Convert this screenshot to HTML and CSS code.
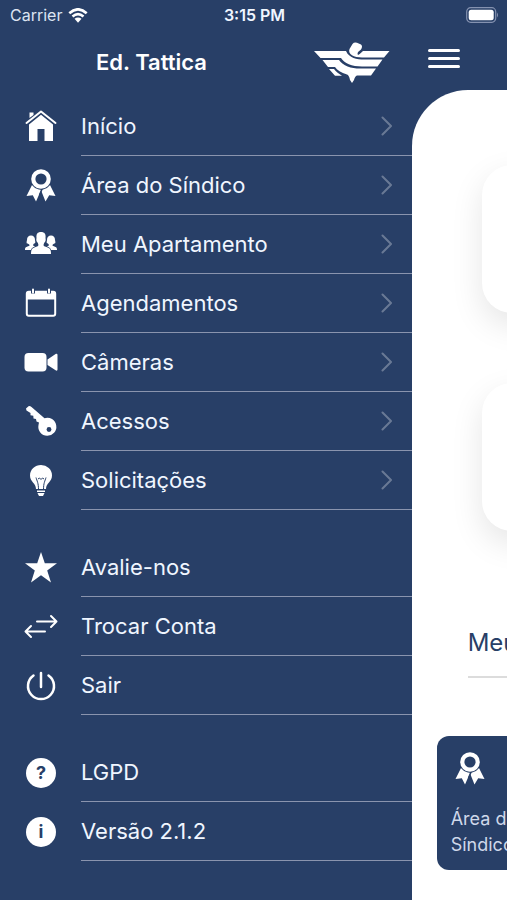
FILE: index.html
```
<!DOCTYPE html>
<html lang="pt-BR">
<head>
    <meta charset="UTF-8">
    <meta name="viewport" content="width=device-width, initial-scale=1.0">
    <title>Ed. Tattica</title>
    <link rel="stylesheet" href="styles.css">
</head>
<body>
    <!-- Shared shapes -->
    <svg class="symbols" aria-hidden="true">
        <symbol id="ribbon" viewBox="0 0 34 34">
            <path d="M8 16 2.500 27 8.800 26.200 12 32.500 17.500 20Z M26 16 31.500 27 25.200 26.200 21.500 32.500 16.500 20Z"/>
            <path class="cut" d="M18.500 19 15.500 26"/>
            <circle class="cut" cx="17" cy="10" r="10"/>
            <circle cx="17" cy="10" r="9.800"/>
            <circle class="hole" cx="17" cy="10" r="5.600"/>
        </symbol>
        <symbol id="chevron" viewBox="0 0 12 20">
            <path class="line" d="M1.500 1.500 10 10 1.500 18.500"/>
        </symbol>
    </svg>

    <header class="status-bar">
        <div class="carrier">
            <span>Carrier</span>
            <svg class="wifi" viewBox="0 0 20 15" aria-hidden="true">
                <path d="M1.300 5.200Q10-2.600 18.700 5.200M4.500 8.500Q10 3.700 15.500 8.500"/>
                <path class="dot" d="M6.500 10.800Q10 8 13.500 10.800L10 14.800Z"/>
            </svg>
        </div>
        <time class="clock">3:15 PM</time>
        <svg class="battery" viewBox="0 0 33 16" aria-hidden="true">
            <rect class="shell" x="0.700" y="0.700" width="29" height="14.600" rx="4"/>
            <rect x="2.700" y="2.700" width="25" height="10.600" rx="2.500"/>
            <path class="cap" d="M31 5.500Q33 8 31 10.500Z"/>
        </svg>
    </header>

    <div class="layout">
        <aside class="menu">
            <div class="menu-header">
                <h1>Ed. Tattica</h1>
                <svg class="logo" viewBox="0 0 76 41" aria-hidden="true">
                    <path d="M49 9H75.500L70 15.500H48C40 15.500 33.500 12 35.500 7L38.500 2Q40 0 43 0.700L47 2.500Q49 4 47 7.500L44 10Q43 12 44 13Q46 12 49 9Z"/>
                    <path d="M0 9H32C35 16 43 17.500 50 17.500H68.500L63.500 24.500H48C38 24.500 30 21 27 16H6.500Z"/>
                    <path d="M8.500 18H25C29 24 37 26.500 46 26.500H62L57 33.500H43Q41 34 40 38L38 41L36 38Q35 33 33 32.500C27 31 23 28 21 25H14Z"/>
                    <path d="M15 27H20C22 30 25 32 28 33.700H21Z"/>
                </svg>
            </div>

            <nav>
                <ul class="menu-list">
                    <li><a href="#">
                        <svg class="icon" viewBox="0 0 34 34" aria-hidden="true">
                            <path d="M5.500 8V2.500H9.500V5ZM17 4.800 29 14.500V31H20.500V19H13.500V31H5V14.500Z"/>
                            <path class="line" d="M2.500 13 17 1.500 31.500 13"/>
                        </svg>
                        <span class="label">Início <svg class="chevron" aria-hidden="true"><use href="#chevron"/></svg></span>
                    </a></li>
                    <li><a href="#">
                        <svg class="icon" aria-hidden="true"><use href="#ribbon"/></svg>
                        <span class="label">Área do Síndico <svg class="chevron" aria-hidden="true"><use href="#chevron"/></svg></span>
                    </a></li>
                    <li><a href="#">
                        <svg class="icon" viewBox="0 0 34 34" aria-hidden="true">
                            <path d="M1 22C1 19 2 19 5 18C6 17.500 5.500 16.500 4.500 16C3 15 2 16 3 12C3 9 4.500 7.500 7 7.500S11 9 11 12C12 16 10.500 15 9.500 16C9 17 9 18 10 18L13 20V22Z"/>
                            <path d="M33 22C33 19 32 19 29 18C28 17.500 28.500 16.500 29.500 16C31 15 32 16 31 12C31 9 29.500 7.500 27 7.500S23 9 23 12C22 16 23.500 15 24.500 16C25 17 25 18 24 18L21 20V22Z"/>
                            <path class="cut" d="M7 26C7 20 9 20 13 18.500C15 18 14.500 16 13.500 14.500C12.500 13.500 12 12 12.500 10C12 6 13.500 4 17 4S22 6 21.500 10C22 12 21.500 13.500 20.500 14.500C19.500 16 19 18 21 18.500C25 20 27 20 27 26Z"/>
                            <path d="M7 26C7 20 9 20 13 18.500C15 18 14.500 16 13.500 14.500C12.500 13.500 12 12 12.500 10C12 6 13.500 4 17 4S22 6 21.500 10C22 12 21.500 13.500 20.500 14.500C19.500 16 19 18 21 18.500C25 20 27 20 27 26Z"/>
                        </svg>
                        <span class="label">Meu Apartamento <svg class="chevron" aria-hidden="true"><use href="#chevron"/></svg></span>
                    </a></li>
                    <li><a href="#">
                        <svg class="icon" viewBox="0 0 34 34" aria-hidden="true">
                            <rect class="line" x="2.800" y="4.800" width="28.400" height="24" rx="2"/>
                            <path d="M3 5H31V12.500H3Z"/>
                            <path class="cut wide" d="M9 3V6.500M25 3V6.500"/>
                            <path class="line" d="M9 2.500V5.500M25 2.500V5.500"/>
                        </svg>
                        <span class="label">Agendamentos <svg class="chevron" aria-hidden="true"><use href="#chevron"/></svg></span>
                    </a></li>
                    <li><a href="#">
                        <svg class="icon" viewBox="0 0 34 34" aria-hidden="true">
                            <rect x="0.500" y="7" width="22" height="18.500" rx="4"/>
                            <path d="M23.500 13.500 32 7.800Q33.500 7.500 33.500 9V23.500Q33.500 25 32 24.500L23.500 19Z"/>
                        </svg>
                        <span class="label">Câmeras <svg class="chevron" aria-hidden="true"><use href="#chevron"/></svg></span>
                    </a></li>
                    <li><a href="#">
                        <svg class="icon" viewBox="0 0 34 34" aria-hidden="true">
                            <path d="M2 3.500 4.500 1.200Q6 0.800 7.500 2L20.500 13.200A9 9 0 1 1 14.500 20L15 17.500 12.500 16.500 12 14 9.500 13.500 9.300 10.800 6.500 10.300 6.500 8 2.500 5.500Z"/>
                            <circle class="hole" cx="25" cy="24.500" r="2.400"/>
                        </svg>
                        <span class="label">Acessos <svg class="chevron" aria-hidden="true"><use href="#chevron"/></svg></span>
                    </a></li>
                    <li><a href="#">
                        <svg class="icon" viewBox="0 0 34 34" aria-hidden="true">
                            <path d="M12 25C12 19 6 18 6 11.500A11 10.500 0 0 1 28 11.500C28 18 22 19 22 25Z"/>
                            <path class="thin" d="M14.500 25.500C14.500 19 13 17 12 13.500M19.500 25.500C19.500 19 21 17 22 13.500M14 15 15.500 14 17 15.500 18.500 14 20 15"/>
                            <path d="M13 26.500H21V28H13ZM13.500 29H20.500L19 32H15Z"/>
                        </svg>
                        <span class="label">Solicitações <svg class="chevron" aria-hidden="true"><use href="#chevron"/></svg></span>
                    </a></li>
                </ul>

                <ul class="menu-list">
                    <li><a href="#">
                        <svg class="icon" viewBox="0 0 34 34" aria-hidden="true">
                            <path d="M17 1 20.800 12.300H33L23.200 19.500 27 31.500 17 24.200 7 31.500 10.800 19.500 1 12.300H13.200Z"/>
                        </svg>
                        <span class="label">Avalie-nos</span>
                    </a></li>
                    <li><a href="#">
                        <svg class="icon" viewBox="0 0 34 34" aria-hidden="true">
                            <path class="line" d="M13 11.500H32.500M27 6 32.500 11.500 27 17M21 21.500H1.500M7 16 1.500 21.500 7 27"/>
                        </svg>
                        <span class="label">Trocar Conta</span>
                    </a></li>
                    <li><a href="#">
                        <svg class="icon" viewBox="0 0 34 34" aria-hidden="true">
                            <path class="line power" d="M9.500 6.500A13 13 0 1 0 24.500 6.500M17 4V18"/>
                        </svg>
                        <span class="label">Sair</span>
                    </a></li>
                </ul>

                <ul class="menu-list">
                    <li><a href="#">
                        <span class="badge" aria-hidden="true">?</span>
                        <span class="label">LGPD</span>
                    </a></li>
                    <li><a href="#">
                        <span class="badge" aria-hidden="true">i</span>
                        <span class="label">Versão 2.1.2</span>
                    </a></li>
                </ul>
            </nav>
        </aside>

        <main class="home">
            <button class="hamburger" type="button" aria-label="Menu">
                <span></span>
                <span></span>
                <span></span>
            </button>
            <div class="sheet">
                <div class="card"></div>
                <div class="card"></div>
                <h2>Meu</h2>
                <a class="tile" href="#">
                    <svg class="icon" aria-hidden="true"><use href="#ribbon"/></svg>
                    <span>Área do<br>Síndico</span>
                </a>
            </div>
        </main>
    </div>
</body>
</html>
```

FILE: styles.css
```
* {
    box-sizing: border-box;
}
body {
    margin: 0;
    min-height: 100vh;
    display: flex;
    flex-direction: column;
    overflow-x: hidden;
    font-family: Inter, "Liberation Sans", sans-serif;
    background-color: #283f67;
    color: #f0f6ff;
}
h1, h2, ul {
    margin: 0;
    padding: 0;
}
a {
    color: inherit;
    text-decoration: none;
}
svg {
    fill: #fff;
    flex: none;
}
.symbols {
    display: none;
}
.line {
    fill: none;
    stroke: #fff;
    stroke-width: 2;
    stroke-linecap: round;
    stroke-linejoin: round;
}
.power {
    stroke-width: 2.5;
}
.cut {
    fill: none;
    stroke: #283f67;
    stroke-width: 1.5;
}
.wide {
    stroke-width: 4;
}
.hole {
    fill: #283f67;
}
.thin {
    fill: none;
    stroke: #283f67;
    stroke-width: 1;
}

/* Status bar */
.status-bar {
    display: grid;
    grid-template-columns: 1fr auto 1fr;
    align-items: center;
    height: 30px;
    padding: 0 8px 0 10px;
    font-size: 16px;
}
.carrier {
    display: flex;
    align-items: center;
    gap: 6px;
    color: #dce4f2;
}
.clock {
    font-weight: 600;
}
.wifi {
    width: 20px;
    height: 15px;
    fill: none;
    stroke: #fff;
    stroke-width: 2.6;
}
.wifi .dot {
    fill: #fff;
    stroke: none;
}
.battery {
    width: 33px;
    height: 16px;
    justify-self: end;
}
.battery .shell {
    fill: none;
    stroke: #8592b0;
    stroke-width: 1.2;
}
.battery .cap {
    fill: #8592b0;
}

.layout {
    flex: 1;
    display: flex;
}

/* Side menu */
.menu {
    flex: none;
    width: 81.2%;
}
.menu-header {
    display: flex;
    align-items: center;
    justify-content: space-between;
    height: 67px;
    padding: 0 22px 3px 96px;
}
.menu-header h1 {
    font-size: 22px;
    font-weight: 600;
    color: #fff;
}
.logo {
    width: 76px;
    height: 41px;
}
.menu-list {
    list-style: none;
    margin-bottom: 28px;
}
.menu-list a {
    display: flex;
    align-items: center;
    gap: 23px;
    padding-left: 24px;
}
.icon {
    width: 34px;
    height: 34px;
}
.label {
    flex: 1;
    display: flex;
    align-items: center;
    justify-content: space-between;
    height: 59px;
    padding-right: 19px;
    border-bottom: 1px solid #8a94ae;
    font-size: 22px;
}
.chevron {
    width: 12px;
    height: 20px;
    opacity: 0.3;
}
.badge {
    display: flex;
    align-items: center;
    justify-content: center;
    width: 30px;
    height: 30px;
    margin: 0 2px;
    border-radius: 50%;
    background-color: #fff;
    color: #283f67;
    font-size: 18px;
    font-weight: 700;
}

/* Home screen, pushed to the right by the menu */
.home {
    flex: 1;
    min-width: 0;
    display: flex;
    flex-direction: column;
}
.hamburger {
    display: flex;
    flex-direction: column;
    justify-content: center;
    gap: 5px;
    width: 32px;
    height: 56px;
    margin: 0 0 4px 16px;
    padding: 0;
    border: 0;
    background: none;
}
.hamburger span {
    height: 3px;
    border-radius: 2px;
    background-color: #fff;
}
.sheet {
    flex: 1;
    padding: 75px 0 30px;
    overflow: hidden;
    border-top-left-radius: 56px;
    background-color: #fff;
    color: #283f67;
}
.card {
    width: 400px;
    height: 148px;
    margin: 0 0 70px 70px;
    border-radius: 30px;
    background-color: #fff;
    box-shadow: 0 12px 32px rgba(0, 0, 0, 0.1);
}
.sheet h2 {
    width: 400px;
    height: 77px;
    margin: 0 0 58px 56px;
    padding-top: 26px;
    border-bottom: 2px solid #dcdcdc;
    font-size: 24px;
    line-height: 32px;
    font-weight: 400;
}
.tile {
    display: flex;
    flex-direction: column;
    gap: 20px;
    width: 134px;
    height: 134px;
    margin-left: 25px;
    padding: 16px 14px;
    border-radius: 12px;
    background-color: #283f67;
    color: #cfd8ea;
    font-size: 18px;
    line-height: 26px;
}
.tile .icon {
    margin-left: 2px;
}
```
